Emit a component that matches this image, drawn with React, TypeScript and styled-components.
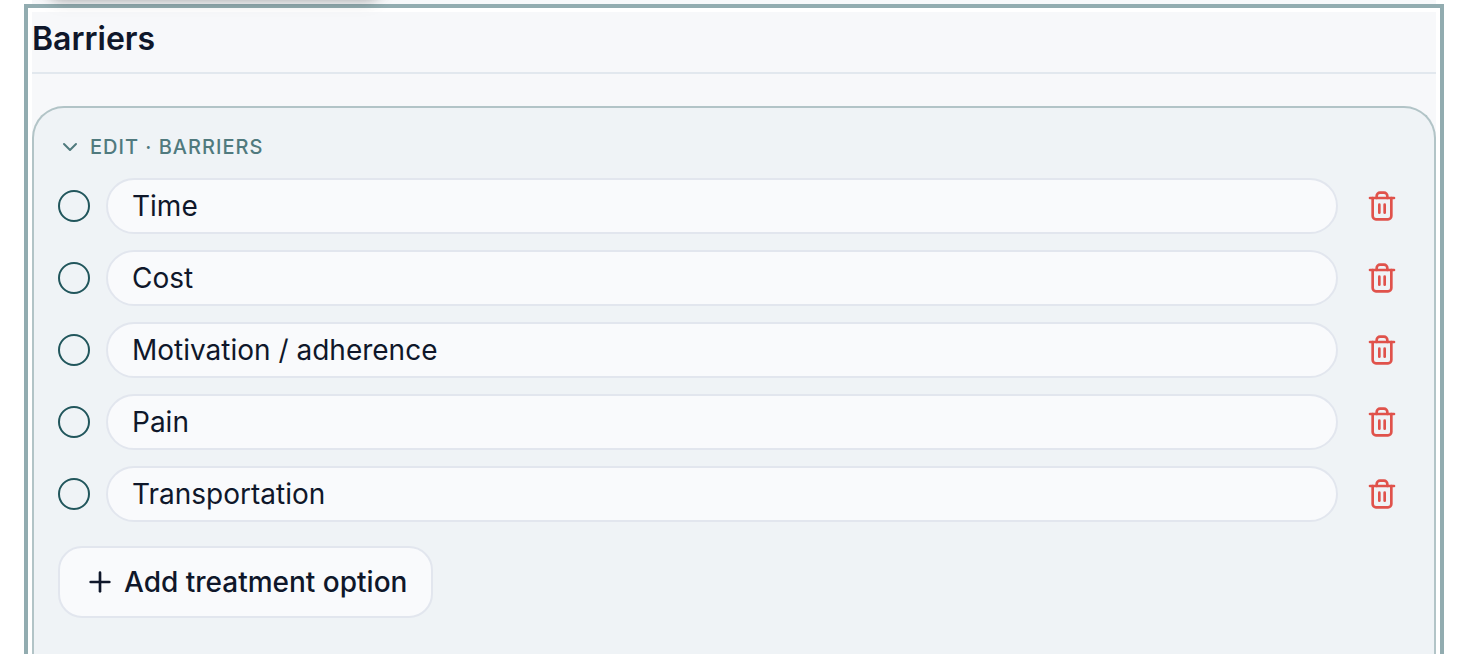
import React, { useState } from "react";
import styled, { createGlobalStyle } from "styled-components";
import { ChevronDown, Plus } from "lucide-react";

const GlobalStyle = createGlobalStyle`
  *, *::before, *::after { box-sizing: border-box; }
  body {
    margin: 0;
    background: #ffffff;
    color: #0f172a;
    font-family: Inter, "Liberation Sans", sans-serif;
    -webkit-font-smoothing: antialiased;
  }
`;

const Page = styled.main`
  position: relative;
  display: flex;
  flex-direction: column;
  min-height: 100vh;
  padding: 0 36px 0 24px;
  overflow: hidden;
`;

const PageStrip = styled.div`
  height: 4px;
  margin: 0 8px;
  background: #f7f8fa;
`;

const CardShadow = styled.div`
  position: absolute;
  top: -44px;
  left: 46px;
  width: 336px;
  height: 40px;
  border-radius: 16px;
  box-shadow: 0 4px 12px rgba(0, 0, 0, 0.28), 0 4px 20px rgba(0, 0, 0, 0.1);
  pointer-events: none;
`;

const FocusRing = styled.div`
  position: relative;
  display: flex;
  flex: 1;
  flex-direction: column;
  padding: 4px 4px 0;
  border: 4px solid #92acb0;
  border-bottom: 0;
  background: #ffffff;
`;

const Section = styled.section`
  display: flex;
  flex: 1;
  flex-direction: column;
  gap: 32px;
  background: #f7f8fa;
`;

const Heading = styled.h2`
  margin: 0;
  padding: 8px 0 14px;
  border-bottom: 2px solid #e2e8ee;
  font-size: 32px;
  font-weight: 600;
  line-height: 38px;
`;

const Panel = styled.div`
  display: flex;
  flex: 1;
  flex-direction: column;
  align-items: stretch;
  padding: 24px 24px 36px;
  border: 2px solid #b2c4c7;
  border-bottom: 0;
  border-radius: 32px 32px 0 0;
  background: #eff3f6;
`;

const Toggle = styled.button`
  display: flex;
  align-items: center;
  align-self: flex-start;
  gap: 8px;
  height: 30px;
  margin: 0 0 16px;
  padding: 0;
  border: 0;
  background: none;
  color: #507a7e;
  font: inherit;
  font-size: 20px;
  font-weight: 500;
  letter-spacing: 1px;
  text-transform: uppercase;
  cursor: pointer;
`;

const OptionList = styled.ul`
  display: flex;
  flex-direction: column;
  gap: 16px;
  margin: 0 0 24px;
  padding: 0;
  list-style: none;
`;

const OptionRow = styled.li`
  display: flex;
  align-items: center;
  gap: 16px;
`;

const OptionCheck = styled.input`
  flex: none;
  appearance: none;
  width: 32px;
  height: 32px;
  margin: 0;
  border: 2px solid #21565c;
  border-radius: 50%;
  cursor: pointer;

  &:checked {
    background: #21565c;
    box-shadow: inset 0 0 0 4px #eff3f6;
  }
`;

const OptionInput = styled.input`
  flex: 1;
  min-width: 0;
  height: 56px;
  padding: 0 24px;
  border: 2px solid #e2e6ee;
  border-radius: 28px;
  background: #f9fafc;
  color: inherit;
  font: inherit;
  font-size: 28px;
`;

const DeleteButton = styled.button`
  display: flex;
  flex: none;
  align-items: center;
  justify-content: center;
  width: 56px;
  height: 56px;
  padding: 0;
  border: 0;
  background: none;
  color: #e0524b;
  cursor: pointer;
`;

const AddButton = styled.button`
  display: flex;
  align-items: center;
  align-self: flex-start;
  gap: 8px;
  height: 72px;
  padding: 0 24px;
  border: 2px solid #e2e6ee;
  border-radius: 24px;
  background: #f9fafc;
  color: inherit;
  font: inherit;
  font-size: 28px;
  font-weight: 500;
  cursor: pointer;
`;

const TrashIcon = () => (
  <svg
    width="32"
    height="32"
    viewBox="0 0 24 24"
    fill="none"
    stroke="currentColor"
    strokeWidth="2"
    strokeLinecap="round"
    strokeLinejoin="round"
    aria-hidden="true"
  >
    <path d="M3 6h18" />
    <path d="M19 6v13.5a2.5 2.5 0 0 1-2.5 2.5h-9a2.5 2.5 0 0 1-2.5-2.5V6" />
    <path d="M8 6V4.500a2.500 2.500 0 0 1 2.500-2.500h3a2.500 2.500 0 0 1 2.500 2.500V6" />
    <path d="M10 11v6" />
    <path d="M14 11v6" />
  </svg>
);

type Option = { id: number; text: string };

const initialOptions: Option[] = [
  "Time",
  "Cost",
  "Motivation / adherence",
  "Pain",
  "Transportation",
].map((text, id) => ({ id, text }));

export default function App() {
  const [open, setOpen] = useState(true);
  const [options, setOptions] = useState(initialOptions);

  const rename = (id: number, text: string) =>
    setOptions((list) => list.map((o) => (o.id === id ? { id, text } : o)));
  const remove = (id: number) =>
    setOptions((list) => list.filter((o) => o.id !== id));
  const add = () => setOptions((list) => [...list, { id: Date.now(), text: "" }]);

  return (
    <>
      <GlobalStyle />
      <Page>
        <PageStrip />
        <FocusRing>
          <Section aria-labelledby="barriers">
            <Heading id="barriers">Barriers</Heading>
            <Panel>
              <Toggle type="button" aria-expanded={open} onClick={() => setOpen(!open)}>
                <ChevronDown size={24} strokeWidth={2} />
                Edit · Barriers
              </Toggle>
              {open && (
                <>
                  <OptionList>
                    {options.map(({ id, text }) => (
                      <OptionRow key={id}>
                        <OptionCheck type="checkbox" aria-label={`Select ${text}`} />
                        <OptionInput
                          type="text"
                          aria-label="Barrier"
                          value={text}
                          onChange={(e) => rename(id, e.target.value)}
                        />
                        <DeleteButton
                          type="button"
                          aria-label={`Delete ${text}`}
                          onClick={() => remove(id)}
                        >
                          <TrashIcon />
                        </DeleteButton>
                      </OptionRow>
                    ))}
                  </OptionList>
                  <AddButton type="button" onClick={add}>
                    <Plus size={32} strokeWidth={2} />
                    Add treatment option
                  </AddButton>
                </>
              )}
            </Panel>
          </Section>
        </FocusRing>
        <CardShadow />
      </Page>
    </>
  );
}
